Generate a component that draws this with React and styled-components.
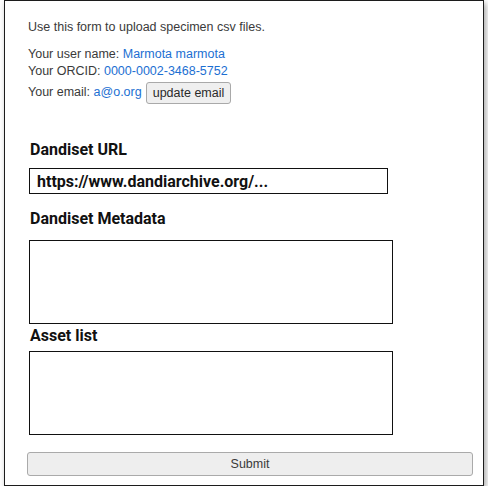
import React from "react";
import styled, { createGlobalStyle } from "styled-components";

const GlobalStyle = createGlobalStyle`
  body {
    margin: 0;
    background: #ffffff;
    font-family: "Liberation Sans", Arial, sans-serif;
  }
`;

const Frame = styled.div`
  box-sizing: border-box;
  width: 480px;
  height: 486px;
  margin-left: 4px;
  border: 1px solid #1c1c1c;
  background: #ffffff;
  box-shadow: 2px 3px 6px rgba(0, 0, 0, 0.35);
  padding-top: 18px;
`;

const Intro = styled.p`
  margin: 0 0 11px 23px;
  font-size: 12.5px;
  line-height: 16px;
  color: #3a3a3a;
`;

const Info = styled.div`
  margin-left: 23px;
  font-size: 12.5px;
  color: #3a3a3a;
`;

const InfoRow = styled.div`
  height: ${props => props.$tall ? "24px" : "17px"};
  line-height: ${props => props.$tall ? "24px" : "17px"};
  white-space: nowrap;
`;

const Link = styled.a`
  color: #1c6fd2;
  text-decoration: none;
`;

const SmallButton = styled.button`
  box-sizing: border-box;
  vertical-align: middle;
  height: 22px;
  padding: 0 6px;
  margin: 0 0 0 4px;
  font-family: "Liberation Sans", Arial, sans-serif;
  font-size: 12.5px;
  color: #2a2a2a;
  background: #efefef;
  border: 1px solid #a9a9a9;
  border-radius: 3px;
`;

const Form = styled.form`
  display: flex;
  flex-direction: column;
  margin-top: 36px;
`;

const Label = styled.label`
  display: block;
  margin: ${props => props.$margin || "0"};
  padding-left: 25px;
  font-family: Roboto, "Liberation Sans", sans-serif;
  font-weight: 700;
  font-size: 16px;
  line-height: 19px;
  color: #111111;
`;

const UrlInput = styled.input`
  box-sizing: border-box;
  width: 359px;
  height: 26px;
  margin-left: 24px;
  padding: 0 7px;
  border: 1px solid #111111;
  border-radius: 0;
  font-family: Roboto, "Liberation Sans", sans-serif;
  font-weight: 700;
  font-size: 16px;
  color: #111111;
  outline: none;
`;

const TextBox = styled.textarea`
  box-sizing: border-box;
  display: block;
  width: 364px;
  height: 84px;
  margin-left: 24px;
  border: 1px solid #111111;
  border-radius: 0;
  resize: none;
  outline: none;
`;

const SubmitButton = styled.button`
  box-sizing: border-box;
  width: 446px;
  height: 24px;
  margin: 17px 0 0 22px;
  font-family: "Liberation Sans", Arial, sans-serif;
  font-size: 12.5px;
  color: #3a3a3a;
  background: #eeeeee;
  border: 1px solid #aaaaaa;
  border-radius: 3px;
`;

const App = () => {
  return (
    <>
      <GlobalStyle />
      <Frame>
        <Intro>Use this form to upload specimen csv files.</Intro>
        <Info>
          <InfoRow>
            Your user name: <Link href="#">Marmota marmota</Link>
          </InfoRow>
          <InfoRow>
            Your ORCID: <Link href="#">0000-0002-3468-5752</Link>
          </InfoRow>
          <InfoRow $tall>
            Your email: <Link href="#">a@o.org</Link>
            <SmallButton type="button">update email</SmallButton>
          </InfoRow>
        </Info>
        <Form onSubmit={e => e.preventDefault()}>
          <Label $margin="0 0 9px">Dandiset URL</Label>
          <UrlInput defaultValue="https://www.dandiarchive.org/..." />
          <Label $margin="15px 0 12px">Dandiset Metadata</Label>
          <TextBox />
          <Label $margin="2px 0 6px">Asset list</Label>
          <TextBox />
          <SubmitButton type="submit">Submit</SubmitButton>
        </Form>
      </Frame>
    </>
  );
};

export default App;
